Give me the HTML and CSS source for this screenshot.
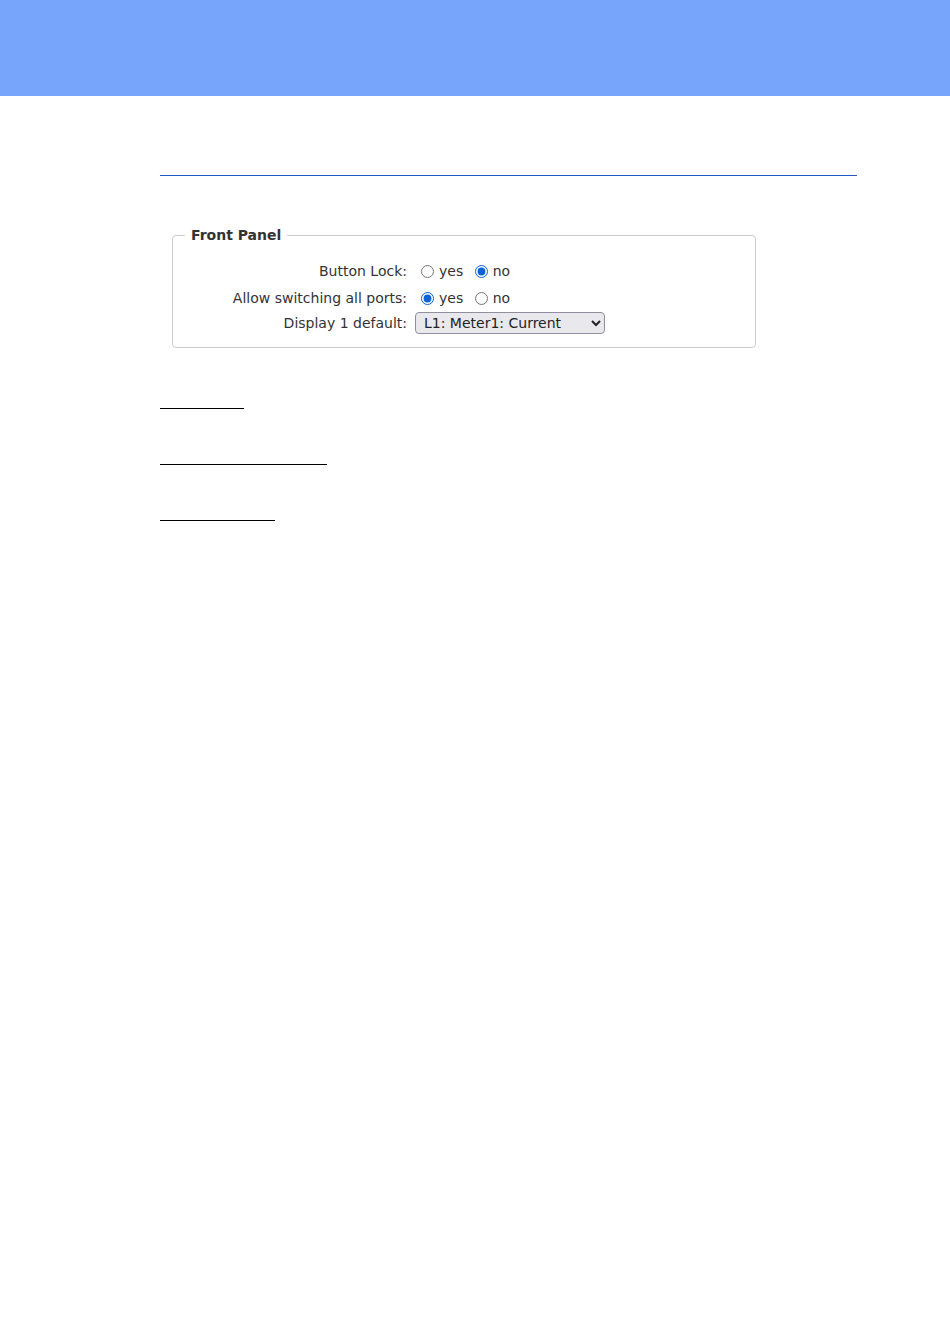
FILE: index.html
```html
<!DOCTYPE html>
<html>

<head>
  <meta charset="utf-8">
  <title>Front Panel</title>
  <link rel="stylesheet" href="styles.css">
</head>

<body>
  <div class="header"></div>

  <div class="content">
    <div class="rule"></div>

    <form class="settings">
      <fieldset>
        <legend>Front Panel</legend>
        <table>
          <tr class="radio-row">
            <td class="label">Button Lock:</td>
            <td>
              <label><input type="radio" name="lock" value="yes">yes</label>
              <label><input type="radio" name="lock" value="no" checked>no</label>
            </td>
          </tr>
          <tr class="radio-row">
            <td class="label">Allow switching all ports:</td>
            <td>
              <label><input type="radio" name="ports" value="yes" checked>yes</label>
              <label><input type="radio" name="ports" value="no">no</label>
            </td>
          </tr>
          <tr class="select-row">
            <td class="label">Display 1 default:</td>
            <td>
              <select>
                <option>L1: Meter1: Current</option>
              </select>
            </td>
          </tr>
        </table>
      </fieldset>
    </form>

    <div class="links">
      <a href="#" class="blank w1"></a>
      <a href="#" class="blank w2"></a>
      <a href="#" class="blank w3"></a>
    </div>
  </div>
</body>

</html>
```

FILE: styles.css
```css
body {
  margin: 0;
  font-family: 'DejaVu Sans', Verdana, sans-serif;
  font-size: 14px;
  color: #333;
  background: #fff;
}

.header {
  height: 96px;
  background-color: #76a5fb;
}

.content {
  padding: 0 93px 0 160px;
}

.rule {
  margin-top: 79px;
  height: 1px;
  background-color: #2158c8;
}

.settings {
  margin: 51px 0 0 12px;
  width: 584px;
}

fieldset {
  margin: 0;
  padding: 14px 0 13px 0;
  border: 1px solid #ccc;
  border-radius: 4px;
}

legend {
  margin-left: 12px;
  padding: 0 6px;
  font-weight: bold;
  color: #333;
}

table {
  border-collapse: collapse;
}

td {
  padding: 0 3px;
}

.radio-row td {
  height: 27px;
}

.select-row td {
  height: 23px;
}

td.label {
  width: 231px;
  text-align: right;
  padding-right: 4px;
}

input[type=radio] {
  margin: 0 5px 0 7px;
  width: 13px;
  height: 13px;
  vertical-align: -2px;
  accent-color: #0b63d6;
}

select {
  font-family: 'DejaVu Sans', Verdana, sans-serif;
  font-size: 14px;
  width: 190px;
  height: 22px;
  margin-left: 1px;
  padding: 0 4px;
  color: #222;
  background-color: #e9e9ed;
  border: 1px solid #8f8f9d;
  border-radius: 4px;
}

.links {
  margin-top: 51px;
}

.blank {
  display: block;
  height: 9px;
  border-bottom: 1px solid #000;
  margin-bottom: 46px;
}

.w1 {
  width: 84px;
}

.w2 {
  width: 167px;
}

.w3 {
  width: 115px;
}
```
